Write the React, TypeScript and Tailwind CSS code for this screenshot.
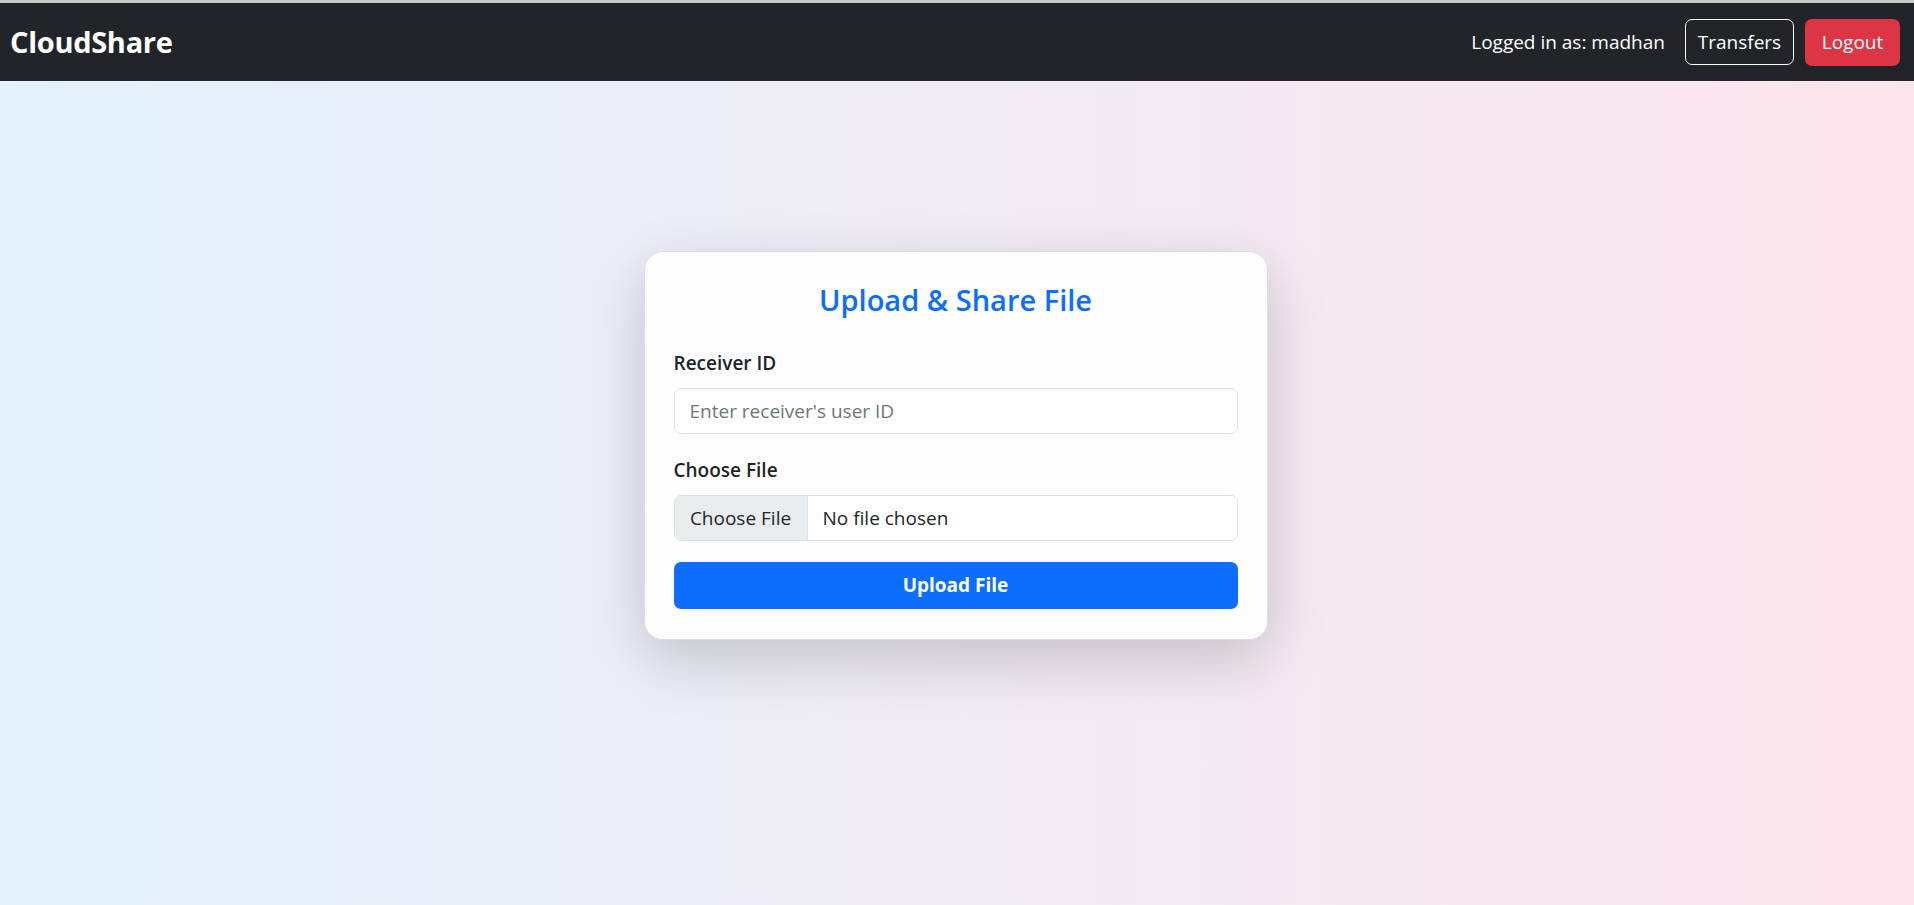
export default function App() {
  return (
    <div
      className="min-h-screen flex flex-col bg-gradient-to-r from-[#e3f2fd] to-[#fce4ec]"
      style={{ fontFamily: '"Open Sans", "Noto Sans", sans-serif' }}
    >
      {/* top bar */}
      <nav className="h-[81px] border-t-[3px] border-[#cacaca] bg-[#212529] flex items-center justify-between pl-[10px] pr-[14px]">
        <span className="text-white font-bold text-[29px] tracking-[-0.3px]">CloudShare</span>
        <div className="flex items-center">
          <span className="text-white text-[19px] mr-[20px]">Logged in as: madhan</span>
          <button className="h-[46px] w-[109px] border border-[#f8f9fa] rounded-[7px] text-white text-[19px]">
            Transfers
          </button>
          <button className="ml-[11px] h-[47px] w-[95px] bg-[#dc3545] rounded-[7px] text-white text-[19px]">
            Logout
          </button>
        </div>
      </nav>

      <main className="flex-1 flex justify-center items-start pt-[170px] pr-[3px]">
        <div className="w-[624px] rounded-[19px] border border-[#dcdde2] bg-white/90 shadow-[0_20px_60px_rgba(0,0,0,0.18)] px-[29px] pt-[30px] pb-[30px]">
          <h2 className="text-center text-[#0d6efd] text-[29px] font-semibold leading-[36px] mb-[30px]">
            Upload &amp; Share File
          </h2>

          <label className="block text-[#212529] text-[19px] font-semibold leading-[30px] mb-[10px]">
            Receiver ID
          </label>
          <input
            type="text"
            placeholder="Enter receiver's user ID"
            className="w-full h-[46px] rounded-[7px] border border-[#dee2e6] bg-white px-[15px] text-[19px] text-[#212529] placeholder:text-[#6c757d] outline-none"
          />

          <label className="block text-[#212529] text-[19px] font-semibold leading-[30px] mt-[21px] mb-[10px]">
            Choose File
          </label>
          <div className="flex h-[46px] rounded-[7px] border border-[#dee2e6] bg-white overflow-hidden text-[19px] text-[#212529]">
            <div className="w-[133px] bg-[#e9ecef] border-r border-[#dee2e6] flex items-center justify-center">
              Choose File
            </div>
            <div className="flex items-center pl-[15px]">No file chosen</div>
          </div>

          <button className="mt-[21px] w-full h-[47px] rounded-[7px] bg-[#0d6efd] text-white text-[19px] font-bold">
            Upload File
          </button>
        </div>
      </main>
    </div>
  );
}
